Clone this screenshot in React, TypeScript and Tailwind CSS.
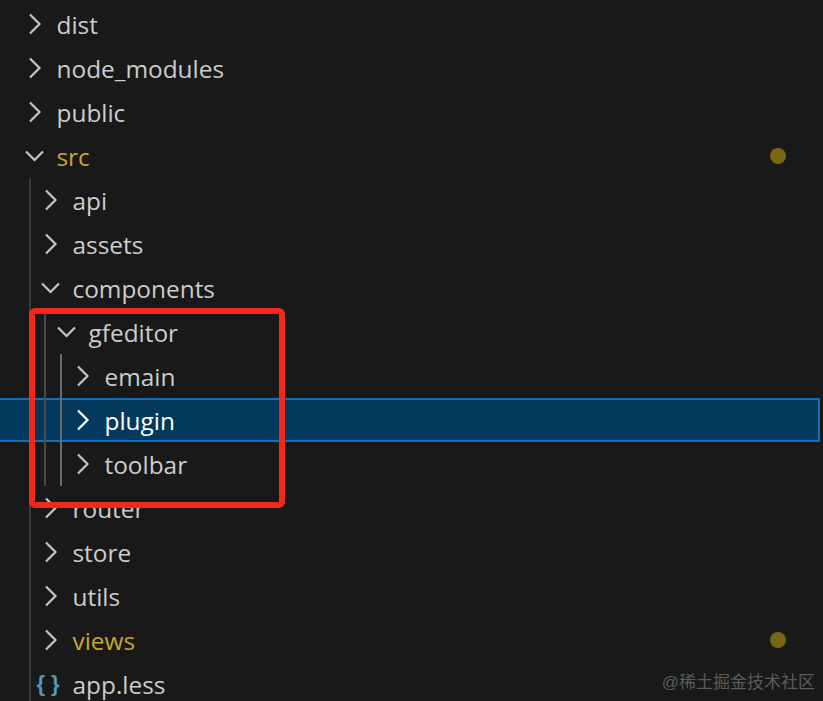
import type { ReactNode } from "react";

const pads = ["pl-[24px]", "pl-[40px]", "pl-[56px]", "pl-[72px]"];

type Item = { name: string; depth: number; open?: boolean; tone?: "git" | "sel"; file?: boolean; dot?: boolean };

function Twistie({ open, color }: { open?: boolean; color: string }) {
  return (
    <svg width="22" height="24" viewBox="0 0 22 24" fill="none" className="shrink-0">
      {open ? (
        <path d="M2 7.5 L10.5 16 L19 7.5" stroke={color} strokeWidth="2.2" />
      ) : (
        <path d="M6 2.5 L15.5 12 L6 21.5" stroke={color} strokeWidth="2.2" />
      )}
    </svg>
  );
}

function Row({ item }: { item: Item }) {
  const sel = item.tone === "sel";
  const textColor = sel ? "text-white" : item.tone === "git" ? "text-[#c9a52c]" : "text-[#cccccc]";
  return (
    <div
      className={`flex h-[44px] items-center box-border ${pads[item.depth]} ${
        sel ? "w-[820px] border-2 border-l-0 border-[#0e6fbe] bg-[#04395e]" : "w-full"
      }`}
    >
      {item.file ? (
        <span className="flex w-[22px] shrink-0 justify-center whitespace-nowrap pr-[6px] font-['Liberation_Sans',sans-serif] text-[22px] font-bold leading-none text-[#519aba]">
          {"{ }"}
        </span>
      ) : (
        <Twistie open={item.open} color={sel ? "#ffffff" : "#c5c5c5"} />
      )}
      <span className={`ml-[10.5px] pt-[2px] text-[24.4px] leading-none ${textColor}`}>{item.name}</span>
      {item.dot && <span className="ml-auto mr-[37px] size-[16px] rounded-full bg-[#786614]" />}
    </div>
  );
}

function Group({ guide, children }: { guide: string; children: ReactNode }) {
  return (
    <div className="relative">
      {children}
      <div className={`absolute inset-y-0 w-[2px] ${guide}`} />
    </div>
  );
}

export default function App() {
  return (
    <div className="relative h-[701px] w-[823px] overflow-hidden bg-[#191919] pt-[2px] font-['Open_Sans','Noto_Sans',sans-serif]">
      <Row item={{ name: "dist", depth: 0 }} />
      <Row item={{ name: "node_modules", depth: 0 }} />
      <Row item={{ name: "public", depth: 0 }} />
      <Row item={{ name: "src", depth: 0, open: true, tone: "git", dot: true }} />
      <Group guide="left-[29px] bg-[#3a3a3a]">
        <Row item={{ name: "api", depth: 1 }} />
        <Row item={{ name: "assets", depth: 1 }} />
        <Row item={{ name: "components", depth: 1, open: true }} />
        <Group guide="left-[44px] bg-[#4a4a4a]">
          <Row item={{ name: "gfeditor", depth: 2, open: true }} />
          <Group guide="left-[60px] bg-[#6a6a6a]">
            <Row item={{ name: "emain", depth: 3 }} />
            <Row item={{ name: "plugin", depth: 3, tone: "sel" }} />
            <Row item={{ name: "toolbar", depth: 3 }} />
          </Group>
        </Group>
        <Row item={{ name: "router", depth: 1 }} />
        <Row item={{ name: "store", depth: 1 }} />
        <Row item={{ name: "utils", depth: 1 }} />
        <Row item={{ name: "views", depth: 1, tone: "git", dot: true }} />
        <Row item={{ name: "app.less", depth: 1, file: true }} />
      </Group>

      {/* red annotation */}
      <div className="absolute left-[29px] top-[308px] h-[200px] w-[256px] rounded-[6px] border-[6px] border-[#f3281c]" />

      {/* watermark */}
      <div className="absolute bottom-[6px] right-[8px] font-['Liberation_Sans','Noto_Sans_CJK_SC',sans-serif] text-[17px] leading-[24px] text-[#5c5c5c]">
        @稀土掘金技术社区
      </div>
    </div>
  );
}
